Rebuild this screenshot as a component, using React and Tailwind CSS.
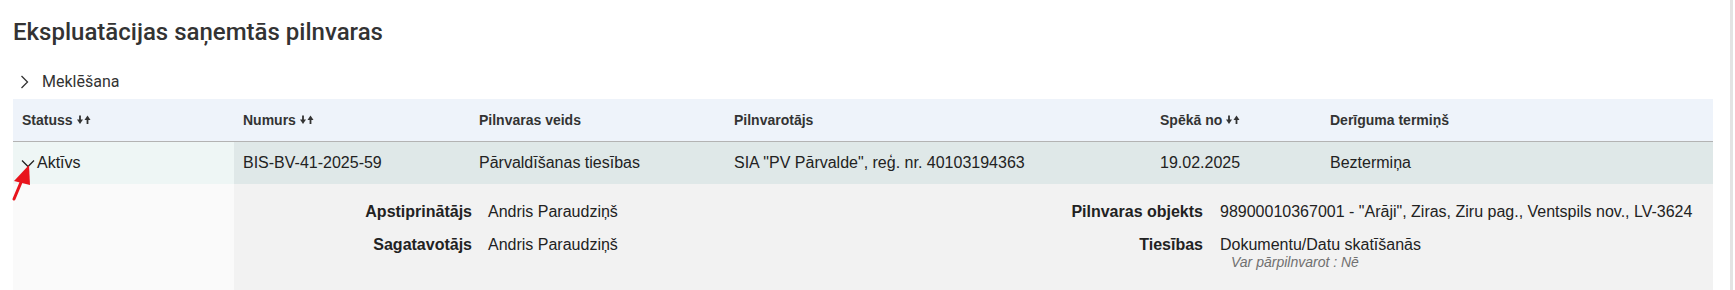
import React from 'react';

const SortIcon = () => (
  <svg width="14" height="10" viewBox="0 0 14 10" className="ml-[4px] shrink-0" aria-hidden="true">
    <line x1="3" y1="0.5" x2="3" y2="6" stroke="#333" strokeWidth="1.8" />
    <polygon points="0,4.6 6,4.6 3,9" fill="#333" />
    <line x1="10.5" y1="9" x2="10.5" y2="4" stroke="#333" strokeWidth="1.8" />
    <polygon points="7.5,5 13.5,5 10.5,0.6" fill="#333" />
  </svg>
);

const Chevron = ({ dir }) =>
  dir === 'down' ? (
    <svg width="14" height="9" viewBox="0 0 14 9" className="mr-[2px] shrink-0" aria-hidden="true">
      <polyline points="1,1.5 7,7.5 13,1.5" fill="none" stroke="#222" strokeWidth="1.3" />
    </svg>
  ) : (
    <svg width="9" height="14" viewBox="0 0 9 14" className="shrink-0" aria-hidden="true">
      <polyline points="1.5,1 7.5,7 1.5,13" fill="none" stroke="#333" strokeWidth="1.3" />
    </svg>
  );

const columns = [
  { label: 'Statuss', width: 'w-[221px]', sort: true },
  { label: 'Numurs', width: 'w-[236px]', sort: true },
  { label: 'Pilnvaras veids', width: 'w-[255px]' },
  { label: 'Pilnvarotājs', width: 'w-[426px]' },
  { label: 'Spēkā no', width: 'w-[170px]', sort: true },
  { label: 'Derīguma termiņš', width: 'w-[392px]' },
];

const App = () => {
  return (
    <div className="relative flex h-[290px] w-[1735px] overflow-hidden bg-white">
      <div className="w-[1713px] shrink-0 pl-[13px]">
        <h1
          className="pt-[18px] text-[24px] font-medium leading-[29px] text-[#333]"
          style={{ fontFamily: 'Roboto, sans-serif' }}
        >
          Ekspluatācijas saņemtās pilnvaras
        </h1>

        <div
          className="mt-[23px] mb-[5px] flex h-[24px] items-center text-[16px] text-[#333]"
          style={{ fontFamily: 'Roboto, sans-serif' }}
        >
          <span className="ml-[7px] mr-[13px] flex">
            <Chevron dir="right" />
          </span>
          <span>Meklēšana</span>
        </div>

        <div className="w-[1700px]" style={{ fontFamily: '"Liberation Sans", Arial, sans-serif' }}>
          {/* header */}
          <div className="flex h-[43px] border-b border-[#b3b3b3] bg-[#eef3fa]">
            {columns.map((c) => (
              <div key={c.label} className={`${c.width} flex items-center pl-[9px] text-[14px] font-bold text-[#333]`}>
                <span>{c.label}</span>
                {c.sort && <SortIcon />}
              </div>
            ))}
          </div>

          {/* data row */}
          <div className="flex h-[42px] text-[16px] text-[#222]">
            <div className="flex w-[221px] items-center bg-[#eef6f5] pl-[8px]">
              <Chevron dir="down" />
              <span>Aktīvs</span>
            </div>
            <div className="flex w-[1479px] items-center bg-[#dfe8e8]">
              <div className="w-[236px] pl-[9px]">BIS-BV-41-2025-59</div>
              <div className="w-[255px] pl-[9px]">Pārvaldīšanas tiesības</div>
              <div className="w-[426px] pl-[9px]">SIA "PV Pārvalde", reģ. nr. 40103194363</div>
              <div className="w-[170px] pl-[9px]">19.02.2025</div>
              <div className="w-[392px] pl-[9px]">Beztermiņa</div>
            </div>
          </div>

          {/* expanded detail */}
          <div className="flex h-[120px] text-[16px] leading-[20px] text-[#222]">
            <div className="w-[221px] bg-[#fafafa]" />
            <div className="flex w-[1479px] bg-[#f2f2f2] pt-[18px]">
              <div className="flex w-[739px] flex-col gap-[13px]">
                <div className="flex">
                  <span className="w-[238px] text-right font-bold">Apstiprinātājs</span>
                  <span className="ml-[16px]">Andris Paraudziņš</span>
                </div>
                <div className="flex">
                  <span className="w-[238px] text-right font-bold">Sagatavotājs</span>
                  <span className="ml-[16px]">Andris Paraudziņš</span>
                </div>
              </div>
              <div className="flex flex-col gap-[13px]">
                <div className="flex">
                  <span className="w-[230px] text-right font-bold">Pilnvaras objekts</span>
                  <span className="ml-[17px]">98900010367001 - "Arāji", Ziras, Ziru pag., Ventspils nov., LV-3624</span>
                </div>
                <div className="flex">
                  <span className="w-[230px] text-right font-bold">Tiesības</span>
                  <div className="ml-[17px] flex flex-col">
                    <span>Dokumentu/Datu skatīšanās</span>
                    <span className="pl-[11px] text-[14px] italic leading-[15px] text-[#707070]">Var pārpilnvarot : Nē</span>
                  </div>
                </div>
              </div>
            </div>
          </div>
        </div>
      </div>

      <div className="ml-[17px] h-full w-[3px] shrink-0 bg-[#e3e3e3]" />

      {/* annotation arrow */}
      <svg className="pointer-events-none absolute left-0 top-0" width="40" height="210" viewBox="0 0 40 210" aria-hidden="true">
        <line x1="22" y1="180" x2="14" y2="199" stroke="#e8141c" strokeWidth="3" strokeLinecap="round" />
        <polygon points="29,165 14,181 30,185" fill="#e8141c" />
      </svg>
    </div>
  );
};

export default App;
